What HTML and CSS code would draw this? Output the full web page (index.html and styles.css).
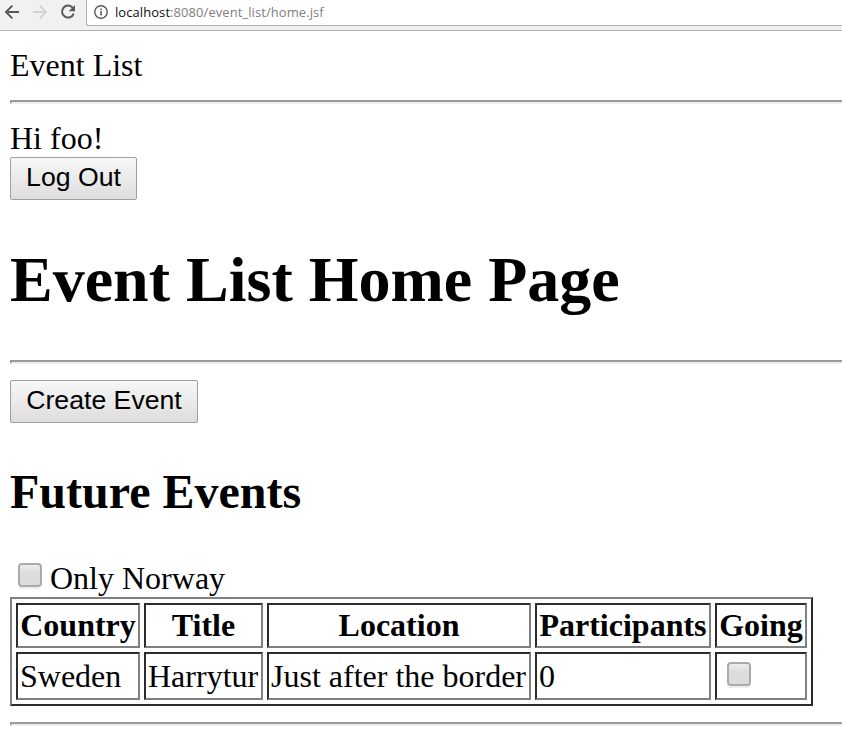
FILE: index.html
```html
<!DOCTYPE html>
<html lang="en">
<head>
<meta charset="utf-8">
<title>Event List</title>
<link rel="stylesheet" href="styles.css">
</head>
<body>
<header class="toolbar">
  <svg class="nav" width="86" height="30" viewBox="0 0 86 30" fill="none" stroke-width="2">
    <path d="M19 12H6.5M12.3 5.6L6 12L12.3 18.4" stroke="#5a5a5a"/>
    <path d="M33 12H45.5M39.7 5.6L46 12L39.7 18.4" stroke="#d3d3d3"/>
    <path d="M73 8.2A6 6 0 1 0 73.7 13.6" stroke="#5a5a5a"/>
    <path d="M75 5V11.3H68.7Z" fill="#5a5a5a"/>
  </svg>
  <div class="address">
    <svg class="info" width="14" height="14" viewBox="0 0 14 14" fill="none">
      <circle cx="7" cy="7" r="6.2" stroke="#5a5a5a" stroke-width="1.4"/>
      <path d="M7 6V10.5M7 3.4V5" stroke="#5a5a5a" stroke-width="1.6"/>
    </svg>
    <span class="url"><span class="host">localhost</span>:8080/event_list/home.jsf</span>
  </div>
</header>
<main class="page">
  <div class="line">Event List</div>
  <hr class="rule rule-top">
  <div class="line">Hi foo!</div>
  <button class="button logout">Log Out</button>
  <h1 class="title">Event List Home Page</h1>
  <hr class="rule rule-middle">
  <button class="button create">Create Event</button>
  <h2 class="subtitle">Future Events</h2>
  <label class="filter"><input class="check" type="checkbox"><span>Only Norway</span></label>
  <table class="events">
    <colgroup><col class="c-country"><col class="c-title"><col class="c-location"><col class="c-participants"><col class="c-going"></colgroup>
    <tr class="head"><th>Country</th><th>Title</th><th>Location</th><th>Participants</th><th>Going</th></tr>
    <tr class="row"><td>Sweden</td><td>Harrytur</td><td>Just after the border</td><td>0</td><td><input class="check going" type="checkbox"></td></tr>
  </table>
  <hr class="rule rule-bottom">
</main>
</body>
</html>
```
FILE: styles.css
```css
* { box-sizing: border-box; }
body {
  margin: 0;
  height: 743px;
  overflow: hidden;
  background: #fff;
  color: #000;
  font-family: "Liberation Serif", serif;
  font-size: 32px;
}
.toolbar {
  display: flex;
  height: 31px;
  background: #f1f1f1;
  border-bottom: 1px solid #b4b4b4;
}
.nav { flex: none; }
.address {
  flex: 1;
  display: flex;
  align-items: center;
  height: 26px;
  padding: 0 0 1px 7px;
  background: #fff;
  border: solid #b0b0b0;
  border-width: 0 0 1px 1px;
  border-bottom-left-radius: 3px;
}
.info { flex: none; margin-right: 7px; }
.url {
  font: 13px/18px "Open Sans", sans-serif;
  letter-spacing: 0.07px;
  color: #808080;
  white-space: nowrap;
}
.host { color: #111; }
.page { padding: 16px 0 0 10px; }
.line { height: 37px; line-height: 37px; }
.rule {
  height: 4px;
  margin: 0;
  border: solid;
  border-width: 2px 0 2px 2px;
  border-color: #9a9a9a #eee #eee #9a9a9a;
}
.rule-top { margin: 16px 0; }
.rule-middle { margin-bottom: 16px; }
.rule-bottom { margin-top: 16px; }
.button {
  display: block;
  height: 43px;
  padding: 0 0 3px;
  border: 1px solid #a0a0a0;
  border-radius: 2px;
  background: linear-gradient(#f7f7f7, #ddd);
  color: #000;
  font: 26.67px/38px "Liberation Sans", sans-serif;
}
.logout { width: 127px; }
.create { width: 188px; }
.title {
  margin: 43px 0 44px;
  font-size: 64px;
  line-height: 73px;
}
.subtitle {
  margin: 41px 0 42px;
  font-size: 48px;
  line-height: 55px;
}
.filter { display: flex; height: 36px; line-height: 35px; }
.check {
  appearance: none;
  flex: none;
  width: 24px;
  height: 24px;
  margin: 2px 8px 0;
  border: 2px solid #aaa;
  border-radius: 4px;
  background: linear-gradient(#eee, #dcdcdc 40%);
  box-shadow: 0 2px 1px #eee;
}
.events {
  width: 803px;
  table-layout: fixed;
  border-collapse: separate;
  border-spacing: 4px;
  border: 2px solid;
  border-color: #808080 #2c2c2c #2c2c2c #808080;
}
.events th, .events td {
  padding: 0 2px;
  border: 2px solid;
  border-color: #2c2c2c #808080 #808080 #2c2c2c;
  line-height: 37px;
  white-space: nowrap;
}
.head { height: 45px; }
.row { height: 48px; }
.c-country { width: 124px; }
.c-title { width: 119px; }
.c-location { width: 264px; }
.c-participants { width: 176px; }
.c-going { width: 92px; }
.going { display: block; margin: 0 8px 4px; }
```
